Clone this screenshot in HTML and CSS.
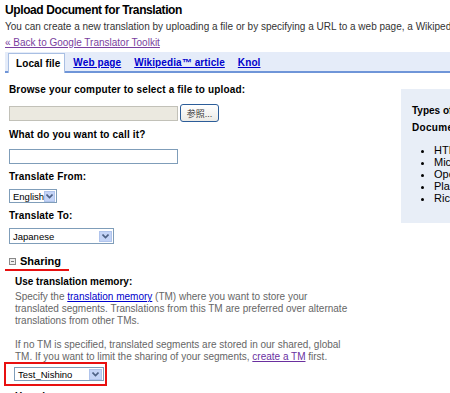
FILE: index.html
```html
<!DOCTYPE html>
<html lang="en">
<head>
    <meta charset="UTF-8">
    <title>Upload Document for Translation</title>
    <link rel="stylesheet" href="styles.css">
</head>
<body>

<div class="page">
    <h1>Upload Document for Translation</h1>
    <p class="intro">You can create a new translation by uploading a file or by specifying a URL to a web page, a Wikipedia article, or a Knol.</p>
    <p class="back-line"><a class="back" href="#">&laquo; Back to Google Translator Toolkit</a></p>

    <div class="tabs">
        <span class="tab active">Local file</span>
        <a class="tab" href="#">Web page</a>
        <a class="tab" href="#">Wikipedia&trade; article</a>
        <a class="tab" href="#">Knol</a>
    </div>

    <div class="content">
        <div class="main">
            <label class="field-label first">Browse your computer to select a file to upload:</label>
            <div class="file-row">
                <span class="file-box"></span>
                <button type="button" class="browse">参照...</button>
            </div>

            <label class="field-label">What do you want to call it?</label>
            <input type="text" class="name-input">

            <label class="field-label">Translate From:</label>
            <div class="select select-from">
                <span class="select-text">English</span>
                <span class="select-arrow"><svg width="7" height="5" viewBox="0 0 7 5"><path d="M0.5 0.5 L3.5 3.5 L6.5 0.5" fill="none" stroke="#4d6185" stroke-width="1.6"/></svg></span>
            </div>

            <label class="field-label">Translate To:</label>
            <div class="select select-to">
                <span class="select-text">Japanese</span>
                <span class="select-arrow"><svg width="7" height="5" viewBox="0 0 7 5"><path d="M0.5 0.5 L3.5 3.5 L6.5 0.5" fill="none" stroke="#4d6185" stroke-width="1.6"/></svg></span>
            </div>

            <div class="section-head">
                <span class="toggle"></span>
                <span class="section-title">Sharing</span>
            </div>

            <div class="section-body">
                <div class="sub-label">Use translation memory:</div>
                <p class="hint">Specify the <a href="#" class="blue">translation memory</a> (TM) where you want to store your<br>translated segments. Translations from this TM are preferred over alternate<br>translations from other TMs.</p>
                <p class="hint">If no TM is specified, translated segments are stored in our shared, global<br>TM. If you want to limit the sharing of your segments, <a href="#" class="visited">create a TM</a> first.</p>
                <div class="marked">
                    <div class="select select-tm">
                        <span class="select-text">Test_Nishino</span>
                        <span class="select-arrow"><svg width="7" height="5" viewBox="0 0 7 5"><path d="M0.5 0.5 L3.5 3.5 L6.5 0.5" fill="none" stroke="#4d6185" stroke-width="1.6"/></svg></span>
                    </div>
                </div>
                <div class="sub-label">Use glossary:</div>
            </div>
        </div>

        <div class="sidebar">
            <div class="side-title">Types of files you can upload</div>
            <div class="side-sub">Documents</div>
            <ul>
                <li>HTML (.html)</li>
                <li>Microsoft Word (.doc)</li>
                <li>OpenDocument Text (.odt)</li>
                <li>Plain Text (.txt)</li>
                <li>Rich Text (.rtf)</li>
            </ul>
        </div>
    </div>
</div>

</body>
</html>
```

FILE: styles.css
```css
body {
    margin: 0;
    padding: 0;
    background: #fff;
    color: #000;
    font-family: Arial, "Liberation Sans", sans-serif;
    font-size: 10px;
    overflow: hidden;
}
.page {
    width: 780px;
    padding: 2px 0 0 5px;
}
h1 {
    margin: 0;
    font-size: 12px;
    line-height: 16px;
    letter-spacing: -0.4px;
}
.intro {
    margin: 3px 0 0;
    line-height: 12px;
    color: #333;
    white-space: nowrap;
}
.back-line {
    margin: 4px 0 0;
    line-height: 12px;
}
.back {
    color: #7a3fa0;
}
.tabs {
    display: flex;
    align-items: flex-end;
    gap: 13px;
    margin-top: 3px;
    height: 19px;
    padding-left: 3px;
    background: #e5ecf9;
    border-bottom: 2px solid #6f95d8;
}
.tab {
    font-size: 10px;
    font-weight: bold;
    color: #0000cc;
    line-height: 17px;
    letter-spacing: 0.1px;
}
.tab.active {
    color: #000;
    text-decoration: none;
    background: #fff;
    border: 1px solid #a9bfe3;
    border-bottom: none;
    padding: 0 4px 0 7px;
    margin: 0 -5px -2px 0;
    line-height: 19px;
}
.content {
    display: flex;
    align-items: flex-start;
}
.main {
    width: 392px;
    padding-left: 4px;
}
.field-label {
    display: block;
    font-weight: bold;
    line-height: 12px;
    margin: 7px 0 8px;
    letter-spacing: 0.15px;
}
.field-label.first {
    margin-top: 11px;
    margin-bottom: 8px;
}
.file-row {
    display: flex;
    align-items: center;
    gap: 2px;
}
.file-box {
    width: 167px;
    height: 13px;
    background: #ebe9e0;
    border: 1px solid #c2c1b8;
}
.browse {
    width: 39px;
    height: 18px;
    padding: 0;
    font-family: Arial, "Noto Sans CJK JP", sans-serif;
    font-size: 9px;
    color: #333;
    background: linear-gradient(#fff, #ecebe6);
    border: 1px solid #2c5d99;
    border-radius: 3px;
}
.name-input {
    display: block;
    width: 169px;
    height: 15px;
    box-sizing: border-box;
    margin: 0;
    border: 1px solid #7f9db9;
}
.select {
    display: flex;
    align-items: center;
    height: 12px;
    margin-top: -2px;
    border: 1px solid #7f9db9;
    background: #fff;
}
.select-text {
    flex: 1;
    padding-left: 3px;
    font-size: 9.5px;
}
.select-arrow {
    display: flex;
    align-items: center;
    justify-content: center;
    width: 13px;
    height: 11px;
    margin-right: 1px;
    background: #c4d4f7;
    border: 1px solid #b0c4ec;
    box-sizing: border-box;
}
.select-from {
    width: 46px;
}
.select-to {
    width: 103px;
    height: 14px;
}
.section-head {
    display: inline-flex;
    align-items: center;
    gap: 4px;
    margin: 11px 0 0 -4px;
    padding: 0 8px 1px 4px;
    border-bottom: 2px solid #e81010;
}
.toggle {
    width: 5px;
    height: 5px;
    border: 1px solid #888;
    background: linear-gradient(#777, #777) center / 3px 1px no-repeat #eee;
}
.section-title {
    font-size: 11px;
    font-weight: bold;
    line-height: 13px;
}
.section-body {
    padding-left: 6px;
}
.sub-label {
    font-weight: bold;
    margin-top: 5px;
    line-height: 12px;
}
.hint {
    margin: 3px 0 12px;
    color: #666;
    line-height: 12px;
    white-space: nowrap;
}
.blue {
    color: #0000cc;
}
.visited {
    color: #6a2f9f;
}
.marked {
    display: flex;
    width: max-content;
    margin: -13px 0 0 -11px;
    padding: 3px 1px 3px 8px;
    border: 2px solid #e81010;
}
.select-tm {
    width: 88px;
    margin-top: 0;
}
.sidebar {
    margin-top: 16px;
    width: 200px;
    padding: 16px 0 19px 11px;
    background: #e8eef7;
}
.side-title {
    font-weight: bold;
    line-height: 12px;
}
.side-sub {
    font-weight: bold;
    margin-top: 5px;
    line-height: 12px;
    letter-spacing: 0.3px;
}
ul {
    margin: 10px 0 0;
    padding-left: 22px;
    font-size: 11px;
}
li {
    line-height: 12px;
}
```
